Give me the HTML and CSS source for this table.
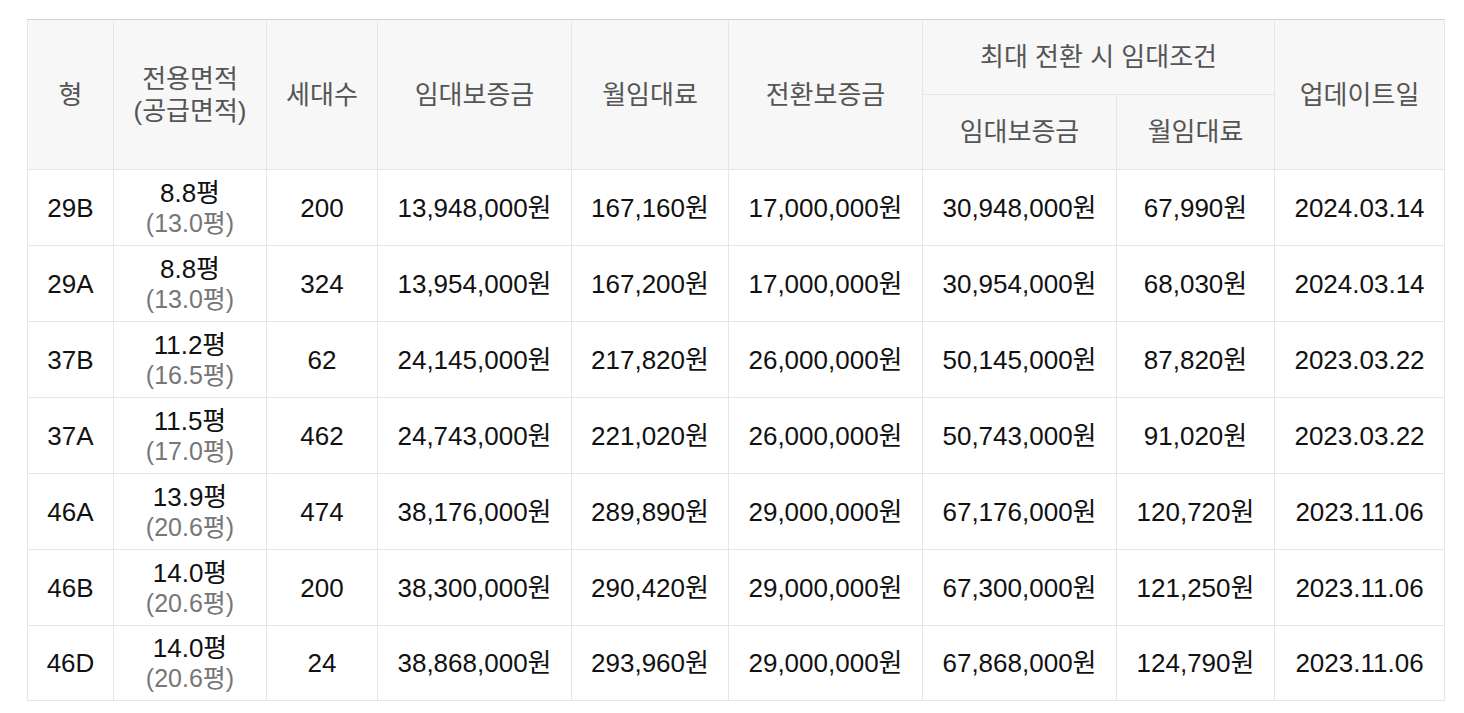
FILE: index.html
```html
<!DOCTYPE html>
<html lang="ko">
<head>
<meta charset="utf-8">
<title>임대조건</title>
<link rel="stylesheet" href="styles.css">
</head>
<body>
<div class="wrap">
<table class="rent">
  <colgroup>
    <col class="c1"><col class="c2"><col class="c3"><col class="c4"><col class="c5"><col class="c6"><col class="c7"><col class="c8"><col class="c9">
  </colgroup>
  <thead>
    <tr class="h1">
      <th rowspan="2">형</th>
      <th rowspan="2">전용면적<br>(공급면적)</th>
      <th rowspan="2">세대수</th>
      <th rowspan="2">임대보증금</th>
      <th rowspan="2">월임대료</th>
      <th rowspan="2">전환보증금</th>
      <th colspan="2">최대 전환 시 임대조건</th>
      <th rowspan="2">업데이트일</th>
    </tr>
    <tr class="h2">
      <th>임대보증금</th>
      <th>월임대료</th>
    </tr>
  </thead>
  <tbody>
    <tr><td>29B</td><td><span class="a">8.8평</span><span class="s">(13.0평)</span></td><td>200</td><td>13,948,000원</td><td>167,160원</td><td>17,000,000원</td><td>30,948,000원</td><td>67,990원</td><td>2024.03.14</td></tr>
    <tr><td>29A</td><td><span class="a">8.8평</span><span class="s">(13.0평)</span></td><td>324</td><td>13,954,000원</td><td>167,200원</td><td>17,000,000원</td><td>30,954,000원</td><td>68,030원</td><td>2024.03.14</td></tr>
    <tr><td>37B</td><td><span class="a">11.2평</span><span class="s">(16.5평)</span></td><td>62</td><td>24,145,000원</td><td>217,820원</td><td>26,000,000원</td><td>50,145,000원</td><td>87,820원</td><td>2023.03.22</td></tr>
    <tr><td>37A</td><td><span class="a">11.5평</span><span class="s">(17.0평)</span></td><td>462</td><td>24,743,000원</td><td>221,020원</td><td>26,000,000원</td><td>50,743,000원</td><td>91,020원</td><td>2023.03.22</td></tr>
    <tr><td>46A</td><td><span class="a">13.9평</span><span class="s">(20.6평)</span></td><td>474</td><td>38,176,000원</td><td>289,890원</td><td>29,000,000원</td><td>67,176,000원</td><td>120,720원</td><td>2023.11.06</td></tr>
    <tr><td>46B</td><td><span class="a">14.0평</span><span class="s">(20.6평)</span></td><td>200</td><td>38,300,000원</td><td>290,420원</td><td>29,000,000원</td><td>67,300,000원</td><td>121,250원</td><td>2023.11.06</td></tr>
    <tr class="last"><td>46D</td><td><span class="a">14.0평</span><span class="s">(20.6평)</span></td><td>24</td><td>38,868,000원</td><td>293,960원</td><td>29,000,000원</td><td>67,868,000원</td><td>124,790원</td><td>2023.11.06</td></tr>
  </tbody>
</table>
</div>
</body>
</html>
```

FILE: styles.css
```css
html, body {
  margin: 0;
  padding: 0;
  background: #ffffff;
}

.wrap {
  padding: 19px 0 0 27px;
}

.rent {
  border-collapse: collapse;
  table-layout: fixed;
  width: 1417px;
  font-family: "Liberation Sans", "Noto Sans CJK KR", sans-serif;
  font-size: 26px;
  color: #111111;
  border-top: 1px solid #cfcfcf;
}

.c1 { width: 86px; }
.c2 { width: 153px; }
.c3 { width: 111px; }
.c4 { width: 194px; }
.c5 { width: 157px; }
.c6 { width: 194px; }
.c7 { width: 194px; }
.c8 { width: 158px; }
.c9 { width: 170px; }

.rent th,
.rent td {
  border: 1px solid #e6e6e6;
  text-align: center;
  vertical-align: middle;
  padding: 0;
}

.rent thead tr:first-child th {
  border-top-color: #cfcfcf;
}

.rent th {
  background: #f7f7f7;
  color: #555555;
  font-weight: normal;
  font-size: 26px;
  line-height: 32px;
}

.rent .h1 th { height: 74px; }
.rent .h2 th { height: 74px; }

.rent td {
  height: 75px;
  line-height: 30px;
}

.rent .last td { height: 74px; }

.rent .a,
.rent .s {
  display: block;
}

.rent .s {
  color: #777777;
  font-size: 25px;
}
```
